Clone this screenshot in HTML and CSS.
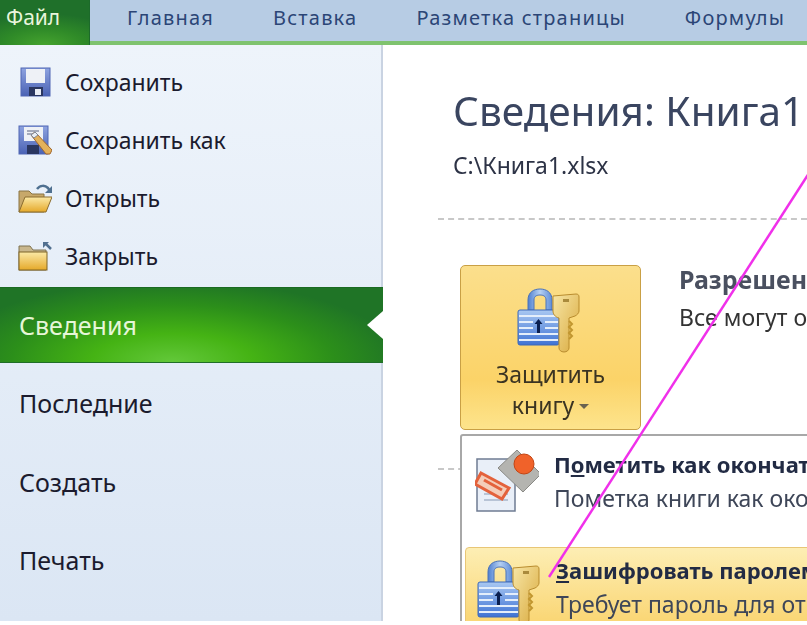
FILE: index.html
```html
<!DOCTYPE html>
<html lang="ru">
<head>
<meta charset="utf-8">
<title>Сведения: Книга1</title>
<link rel="stylesheet" href="styles.css">
</head>
<body>
<svg class="defs" width="0" height="0" aria-hidden="true">
  <defs>
    <linearGradient id="lockBody" x1="0" y1="0" x2="0" y2="1"><stop offset="0" stop-color="#a9c8f2"/><stop offset="1" stop-color="#3f73d4"/></linearGradient>
    <linearGradient id="shackle" x1="0" y1="0" x2="1" y2="0"><stop offset="0" stop-color="#4f7fd0"/><stop offset=".5" stop-color="#b6d0f2"/><stop offset="1" stop-color="#5f8dd8"/></linearGradient>
    <linearGradient id="keyGold" x1="0" y1="0" x2="1" y2="1"><stop offset="0" stop-color="#f7e6a6"/><stop offset="1" stop-color="#d9a93c"/></linearGradient>
    <linearGradient id="folderGold" x1="0" y1="0" x2="0" y2="1"><stop offset="0" stop-color="#fbe9a6"/><stop offset="1" stop-color="#e5a92a"/></linearGradient>
    <linearGradient id="floppy" x1="0" y1="0" x2="0" y2="1"><stop offset="0" stop-color="#8ea3e0"/><stop offset="1" stop-color="#4a62b4"/></linearGradient>
    <symbol id="lockKey" viewBox="0 0 64 66">
      <path d="M11 23V13C11 5 17 2 23 2s12 3 12 11v10h-6V13c0-4-3-5-6-5s-6 1-6 5v10z" fill="url(#shackle)" stroke="#4a72b8"/>
      <rect x="1" y="23" width="41" height="35" rx="2" fill="url(#lockBody)" stroke="#3c68b8"/>
      <path d="M2 29h39M2 35h14M28 35h13M2 41h14M28 41h13M2 47h39M2 53h39" stroke="#e4eefb" stroke-width="2"/>
      <path d="M20 46V37h-2.500l4-5 4 5H23v9z" fill="#0a1f50"/>
      <path d="M36 9l23-2c2 0 3 1 3 3v14c0 2-2 4-4 5l-6 2v30c0 2-2 4-5 4s-5-2-5-4V31c-4-1-6-4-6-7z" fill="url(#keyGold)" stroke="#b98c2e"/>
      <path d="M52 34l3 3-3 3 3 3-3 3 3 3-3 3" fill="none" stroke="#c1962f" stroke-width="2"/>
      <rect x="46" y="12" width="6" height="3" fill="#a98a3c"/>
    </symbol>
  </defs>
</svg>

<header class="tabs">
  <div class="tab-file">Файл</div>
  <nav class="tab-list">
    <span>Главная</span>
    <span>Вставка</span>
    <span>Разметка страницы</span>
    <span>Формулы</span>
  </nav>
</header>

<div class="main">
  <aside class="side">
    <ul class="cmds">
      <li>
        <svg class="cmd-icon" viewBox="0 0 34 30"><rect x="3" y="1" width="29" height="28" fill="url(#floppy)" stroke="#5067b4"/><rect x="8" y="2" width="19" height="14" fill="#eef1f6"/><rect x="11" y="20" width="14" height="9" fill="#2a3660"/><rect x="17" y="22" width="6" height="6" fill="#e9edf5"/></svg>
        <span>Сохранить</span>
      </li>
      <li>
        <svg class="cmd-icon" viewBox="0 0 34 30"><rect x="1" y="1" width="29" height="28" fill="url(#floppy)" stroke="#5067b4"/><rect x="6" y="2" width="19" height="14" fill="#eef1f6"/><path d="M9 6h12M9 9h8" stroke="#8c93a8" stroke-width="1.500"/><rect x="9" y="20" width="12" height="9" fill="#2a3660"/><path d="M13 10l4-3 17 18-2 4-4 0z" fill="#e3b15a" stroke="#a0662c"/><path d="M13 10l4-3 3 3-4 3z" fill="#e9eef4" stroke="#7f8695"/></svg>
        <span>Сохранить как</span>
      </li>
      <li>
        <svg class="cmd-icon" viewBox="0 0 34 30"><path d="M1 29V8h10l3 3h12v18z" fill="#c7a86a" stroke="#8a7444"/><path d="M1 29l6-15h27l-6 15z" fill="url(#folderGold)" stroke="#8a6c2e"/><path d="M19 6c3-4 8-4 11-1l2 3" fill="none" stroke="#4f7090" stroke-width="2.500"/><path d="M34 3v7h-7z" fill="#4f7090"/></svg>
        <span>Открыть</span>
      </li>
      <li>
        <svg class="cmd-icon" viewBox="0 0 34 30"><path d="M1 29V5h11l3 4h13v20z" fill="#c9b78d" stroke="#7f7350"/><rect x="1" y="11" width="28" height="18" fill="url(#folderGold)" stroke="#7f6426"/><path d="M33 8l-5-5" stroke="#52708f" stroke-width="2.500"/><path d="M25 1h6l-6 6z" fill="#52708f"/></svg>
        <span>Закрыть</span>
      </li>
    </ul>
    <div class="active">
      <span>Сведения</span>
      <i class="notch"></i>
    </div>
    <ul class="pages">
      <li>Последние</li>
      <li>Создать</li>
      <li>Печать</li>
    </ul>
  </aside>

  <section class="content">
    <h1>Сведения: Книга1</h1>
    <p class="path">C:\Книга1.xlsx</p>
    <hr class="sep">
    <div class="perm">
      <button class="protect" type="button">
        <svg class="protect-icon"><use href="#lockKey"/></svg>
        <span class="protect-label">Защитить<br>книгу<i class="caret"></i></span>
      </button>
      <div class="perm-text">
        <strong>Разрешения</strong>
        <p>Все могут открывать</p>
      </div>
    </div>
    <hr class="sep sep2">
    <div class="menu">
      <div class="menu-item">
        <svg class="menu-icon" viewBox="0 0 64 66"><path d="M2 9h32l6 8v44H2z" fill="#e9eff8" stroke="#6f7c92" stroke-width="1.500"/><path d="M9 38h24M9 44h24M9 50h24" stroke="#a8b6ca" stroke-width="1.500"/><path d="M23 18L42 0l24 24-18 18z" fill="#b4b4b0" stroke="#8a8a86"/><circle cx="49" cy="14" r="10" fill="#f0622a" stroke="#c44412"/><path d="M6 23L34 38 27 49 0 34z" fill="#f4cdb9" stroke="#e4623c" stroke-width="3"/><path d="M9 30l18 10" stroke="#e4623c" stroke-width="3"/></svg>
        <div class="menu-text">
          <b>П<u>о</u>метить как окончательный</b>
          <span>Пометка книги как окончательной</span>
        </div>
      </div>
      <div class="menu-item hot">
        <svg class="menu-icon lock"><use href="#lockKey"/></svg>
        <div class="menu-text">
          <b><u>З</u>ашифровать паролем</b>
          <span>Требует пароль для открытия</span>
        </div>
      </div>
    </div>
    <svg class="arrow" viewBox="0 0 270 420"><line x1="1" y1="407" x2="263" y2="0" stroke="#f030ea" stroke-width="2.500"/></svg>
  </section>
</div>
</body>
</html>
```

FILE: styles.css
```css
* { box-sizing: border-box; }
html, body { margin: 0; padding: 0; }
body {
  width: 807px;
  height: 625px;
  overflow: hidden;
  background: #fff;
  font-family: "Noto Sans", "Open Sans", sans-serif;
  color: #1d1d2b;
  filter: blur(0.35px);
}
.defs { position: absolute; }
.tabs {
  display: flex;
  height: 45px;
  background: #b7cce4;
  border-bottom: 4px solid #7fc36f;
}
.tab-file {
  width: 90px;
  height: 45px;
  padding: 3px 0 0 6px;
  flex: none;
  font-size: 21px;
  line-height: 28px;
  color: #e9f5dc;
  border-right: 1px solid #1c6a2a;
  background: radial-gradient(ellipse 90% 70% at 50% 100%, #45a32e 0%, #2f8a28 50%, #1f702a 100%);
}
.tab-list {
  display: flex;
  gap: 59px;
  padding: 4px 0 0 37px;
  font-size: 20px;
  line-height: 27px;
  letter-spacing: 1.200px;
  color: #2b4576;
  white-space: nowrap;
}
.main {
  display: flex;
  height: 576px;
  overflow: hidden;
  position: relative;
}
.side {
  flex: none;
  width: 383px;
  background: linear-gradient(180deg, #eef4fb 0%, #dbe6f4 100%);
  border-right: 2px solid #c9d3e2;
  display: flex;
  flex-direction: column;
}
.cmds, .pages { list-style: none; margin: 0; padding: 0; }
.cmds { padding-top: 8px; }
.cmds li {
  display: flex;
  align-items: center;
  gap: 13px;
  height: 58px;
  padding-left: 18px;
  font-size: 23px;
  color: #1b1b2e;
}
.cmd-icon { width: 34px; height: 30px; flex: none; }
.active {
  position: relative;
  height: 76px;
  margin-top: 2px;
  margin-right: -2px;
  padding-left: 19px;
  display: flex;
  align-items: center;
  font-size: 25px;
  line-height: 30px;
  color: #e6f6d8;
  border-top: 1px solid #1a6a22;
  border-bottom: 1px solid #1f6e28;
  background: radial-gradient(ellipse 60% 110% at 45% 100%, #63c83a 0%, #45b314 35%, #2c8f1a 70%, #1f7426 100%);
}
.notch {
  position: absolute;
  right: 0;
  top: 23px;
  width: 0;
  height: 0;
  border-top: 14px solid transparent;
  border-bottom: 14px solid transparent;
  border-right: 16px solid #fff;
}
.pages { padding-top: 1px; }
.pages li {
  height: 78.500px;
  padding-left: 19px;
  display: flex;
  align-items: center;
  font-size: 25px;
  color: #1b1b2e;
}
.content {
  position: relative;
  flex: 1;
  min-width: 0;
  padding: 0 0 0 55px;
  white-space: nowrap;
}
h1 {
  margin: 41px 0 0 15px;
  font-size: 40.500px;
  font-weight: 400;
  line-height: 50px;
  color: #3a4560;
}
.path {
  margin: 16px 0 0 15px;
  font-size: 23px;
  line-height: 26px;
  color: #2d3346;
}
.sep {
  margin: 40px 0 0 0;
  border: 0;
  border-top: 2px dashed #c8c8c8;
}
.perm { display: flex; gap: 38px; margin: 45px 0 0 22px; }
.protect {
  flex: none;
  width: 181px;
  height: 165px;
  padding: 21px 4px 0 0;
  border: 1px solid #c9a045;
  border-radius: 5px;
  background: linear-gradient(180deg, #fbdf8c 0%, #fbd368 70%, #fde48c 100%);
  display: flex;
  flex-direction: column;
  align-items: center;
  font-family: inherit;
}
.protect-icon { width: 64px; height: 66px; flex: none; }
.protect-label {
  margin: 6px -4px 0 0;
  font-size: 23px;
  line-height: 31px;
  color: #3b3422;
}
.caret {
  display: inline-block;
  margin: 0 0 3px 5px;
  border-top: 5px solid #6a6350;
  border-left: 5px solid transparent;
  border-right: 5px solid transparent;
  vertical-align: middle;
}
.perm-text strong {
  display: block;
  font-size: 25px;
  line-height: 28px;
  color: #4a5060;
}
.perm-text p {
  margin: 10px 0 0;
  font-size: 23px;
  line-height: 28px;
  color: #333;
}
.sep2 { margin-top: 38px; }
.menu {
  position: absolute;
  left: 77px;
  top: 389px;
  width: 400px;
  height: 200px;
  background: #fff;
  border: 2px solid #a8a8a8;
  border-radius: 3px;
  padding: 0 0 0 3px;
}
.menu-item { display: flex; gap: 15px; }
.menu-item:first-child { height: 111px; padding: 14px 0 0 10px; }
.menu-icon { width: 64px; height: 66px; flex: none; }
.menu-item.hot {
  padding: 11px 0 0 11px;
  height: 120px;
  border: 1px solid #e8c676;
  border-radius: 4px;
  background: linear-gradient(180deg, #fdeeb4 0%, #fad777 60%, #fbd570 100%);
}
.menu-item.hot .menu-text { margin-top: -3px; }
.menu-text { display: flex; flex-direction: column; gap: 6px; }
.menu-text b {
  font-size: 22px;
  line-height: 28px;
  font-weight: 700;
  color: #222b44;
}
.menu-text span {
  font-size: 23px;
  line-height: 28px;
  color: #3e4658;
}
.arrow {
  position: absolute;
  left: 165px;
  top: 125px;
  width: 270px;
  height: 420px;
  z-index: 3;
  pointer-events: none;
}
```
